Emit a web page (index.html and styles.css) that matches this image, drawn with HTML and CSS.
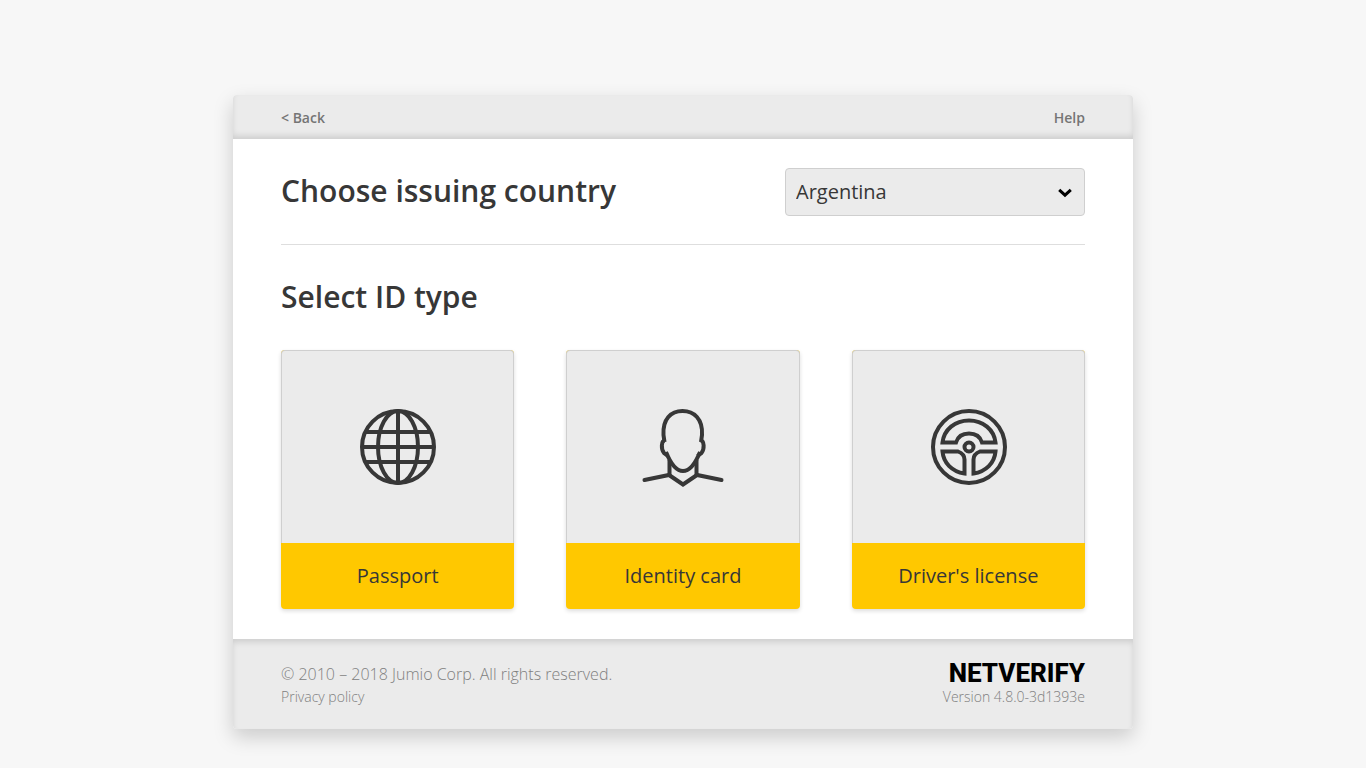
FILE: index.html
```html
<!DOCTYPE html>
<html lang="en">
<head>
<meta charset="utf-8">
<meta name="viewport" content="width=device-width, initial-scale=1">
<title>Netverify</title>
<link rel="stylesheet" href="styles.css">
</head>
<body>
<div class="panel">
  <header class="bar">
    <a class="bar-link" href="#back">&lt; Back</a>
    <a class="bar-link" href="#help">Help</a>
  </header>
  <main class="content">
    <div class="country">
      <h1 class="title"><label for="country">Choose issuing country</label></h1>
      <div class="select">
        <select class="select-field" id="country">
          <option>Argentina</option>
          <option>Austria</option>
          <option>Brazil</option>
        </select>
        <svg class="select-arrow" viewBox="0 0 14 10" aria-hidden="true"><path d="M1.200 1.800 7 7.200l5.800-5.400"/></svg>
      </div>
    </div>
    <h2 class="title title-types">Select ID type</h2>
    <div class="types">
      <button class="type" type="button">
        <span class="type-picture">
          <svg class="icon" viewBox="0 0 84 84" aria-hidden="true">
            <circle cx="42" cy="42" r="36"/>
            <ellipse cx="42" cy="42" rx="20" ry="36"/>
            <path d="M42 6v72M6 42h72M10 27h64M10 57h64"/>
          </svg>
        </span>
        <span class="type-name">Passport</span>
      </button>
      <button class="type" type="button">
        <span class="type-picture">
          <svg class="icon" viewBox="0 0 84 84" aria-hidden="true">
            <path d="M23.500 37 22.500 30C21.500 14 30 6 41.500 6S62 14 61 30l-1 7"/>
            <path d="M24 35.500c-4 0-4 9-1 12.500l4 3M59.500 35.500c4 0 4 9 1 12.500l-4 3"/>
            <path d="M25 47c4 10 10 19 17 19s13-9 17-19"/>
            <path d="M28.500 55v15M55.500 55v15"/>
            <path d="M3.500 75 28 70l14 9.500L56 70l24.500 5" stroke-linecap="round"/>
          </svg>
        </span>
        <span class="type-name">Identity card</span>
      </button>
      <button class="type" type="button">
        <span class="type-picture">
          <svg class="icon" viewBox="-1 0 84 84" aria-hidden="true">
            <circle cx="42" cy="42" r="36"/>
            <circle cx="42" cy="42" r="4.500"/>
            <path d="M15.500 37.500C17 24.500 28 15.500 42 15.500s25 9 26.500 22H55C53 31 48 28.500 42 28.500S31 31 29 37.500Z"/>
            <path d="M15.500 46.500H31c4 1.500 6.500 4 6.500 8V68.500C25 66.500 16.500 58 15.500 46.500Z"/>
            <path d="M68.500 46.500H53c-4 1.500-6.500 4-6.500 8V68.500C59 66.500 67.500 58 68.500 46.500Z"/>
          </svg>
        </span>
        <span class="type-name">Driver's license</span>
      </button>
    </div>
  </main>
  <footer class="footer">
    <div class="legal">
      <span class="copyright">© 2010 – 2018 Jumio Corp. All rights reserved.</span>
      <a class="small" href="#privacy">Privacy policy</a>
    </div>
    <div class="product">
      <span class="brand">NETVERIFY</span>
      <span class="small">Version 4.8.0-3d1393e</span>
    </div>
  </footer>
</div>
</body>
</html>
```

FILE: styles.css
```css
* {
  box-sizing: border-box;
}

body {
  margin: 0;
  padding: 95px 16px 39px;
  background: #f7f7f7;
  color: #373737;
  font-family: "Open Sans", "Noto Sans", sans-serif;
}

.panel {
  max-width: 900px;
  margin: 0 auto;
  border-radius: 4px;
  background: #fff;
  box-shadow: 0 8px 20px rgba(0, 0, 0, 0.18);
}

.bar {
  display: flex;
  justify-content: space-between;
  align-items: center;
  min-height: 44px;
  padding: 2px 48px 0;
  border-radius: 4px 4px 0 0;
  background: #ebebeb;
  box-shadow: inset 0 -4px 6px -1px rgba(0, 0, 0, 0.13);
}

.bar-link {
  color: #757575;
  font-size: 14px;
  font-weight: 600;
  line-height: 20px;
  text-decoration: none;
}

.content {
  padding: 29px 48px 30px;
}

.country {
  display: flex;
  flex-wrap: wrap;
  justify-content: space-between;
  align-items: flex-start;
  gap: 16px;
  padding-bottom: 28px;
  border-bottom: 1px solid #dedede;
}

.title {
  margin: 0;
  font-size: 30px;
  font-weight: 600;
  line-height: 46px;
}

.title-types {
  margin: 29px 0 30px;
}

.select {
  position: relative;
  width: 300px;
}

.select-field {
  display: block;
  width: 100%;
  height: 48px;
  padding: 0 40px 2px 10px;
  border: 1px solid #cfcfcf;
  border-radius: 4px;
  background: #ebebeb;
  color: #373737;
  font: 20px "Open Sans", "Noto Sans", sans-serif;
  appearance: none;
}

.select-arrow {
  position: absolute;
  top: 20px;
  right: 13px;
  width: 14px;
  height: 10px;
  fill: none;
  stroke: #000;
  stroke-width: 3;
  pointer-events: none;
}

.types {
  display: grid;
  grid-template-columns: repeat(3, 1fr);
  gap: 52px;
}

.type {
  display: flex;
  flex-direction: column;
  padding: 0;
  border: 0;
  border-radius: 4px;
  background: #ffc800;
  box-shadow: 0 2px 4px rgba(0, 0, 0, 0.14);
  color: #373737;
  font: 20px/28px "Open Sans", "Noto Sans", sans-serif;
  cursor: pointer;
}

.type-picture {
  display: flex;
  justify-content: center;
  align-items: center;
  width: 100%;
  height: 193px;
  border: 1px solid #cfcfcf;
  border-bottom: 0;
  border-radius: 4px 4px 0 0;
  background: #ebebeb;
}

.type-name {
  width: 100%;
  padding: 19px 8px;
}

.icon {
  width: 84px;
  height: 84px;
  fill: none;
  stroke: #373737;
  stroke-width: 4;
}

.footer {
  display: flex;
  justify-content: space-between;
  min-height: 90px;
  padding: 22px 48px 20px;
  border-radius: 0 0 4px 4px;
  background: #ebebeb;
  box-shadow: inset 0 4px 6px -1px rgba(0, 0, 0, 0.13);
  color: #808080;
  font-weight: 300;
}

.legal,
.product {
  display: flex;
  flex-direction: column;
}

.legal {
  align-items: flex-start;
}

.product {
  align-items: flex-end;
}

.copyright {
  font-size: 16px;
  line-height: 26px;
}

.small {
  color: #808080;
  font-size: 14px;
  line-height: 20px;
  text-decoration: none;
}

.brand {
  color: #000;
  font-family: Roboto, "Open Sans", sans-serif;
  font-size: 26px;
  font-weight: 800;
  line-height: 28px;
  margin-top: -2px;
}
```
